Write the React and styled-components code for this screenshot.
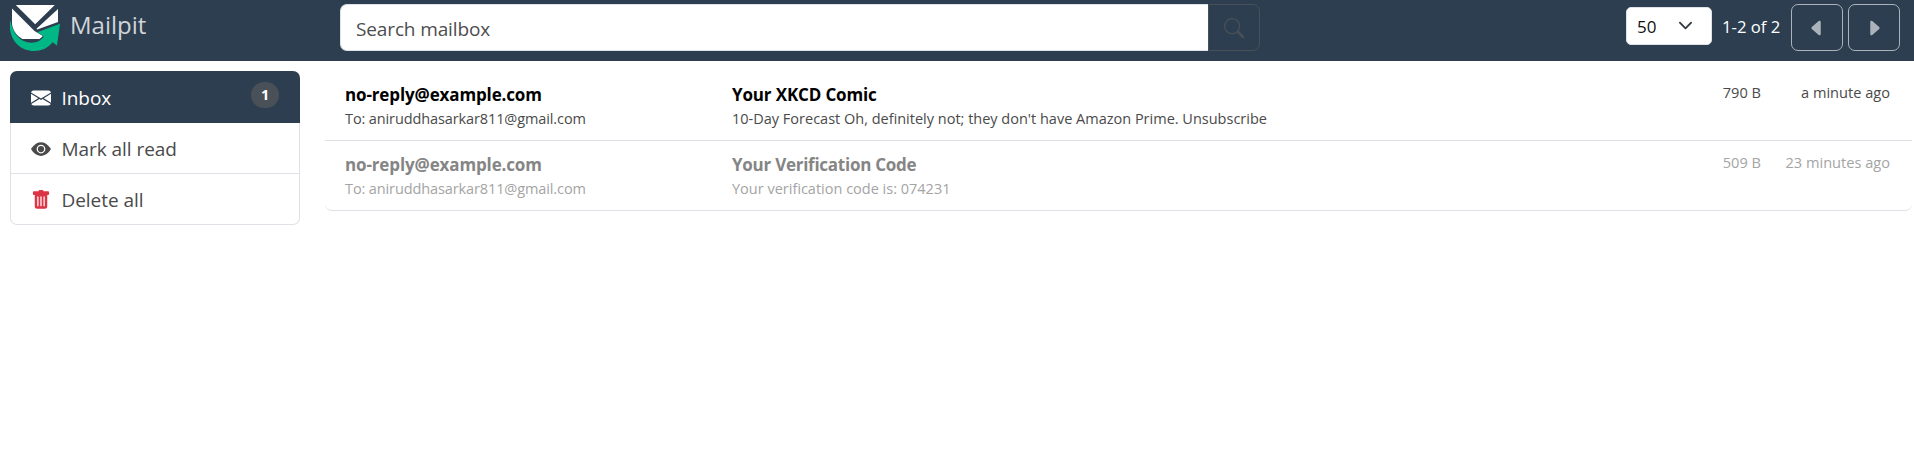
import React from "react";
import styled, { createGlobalStyle } from "styled-components";
import {
  BsCaretLeftFill,
  BsCaretRightFill,
  BsEnvelopeFill,
  BsEyeFill,
  BsSearch,
  BsTrashFill,
} from "react-icons/bs";

const GlobalStyle = createGlobalStyle`
  *, *::before, *::after { box-sizing: border-box; }
  body {
    margin: 0;
    background: #fff;
    color: #4a4a4a;
    font-family: "Open Sans", "Noto Sans", sans-serif;
  }
  button, input, select { font-family: inherit; margin: 0; }
`;

const Navbar = styled.header`
  display: flex;
  align-items: flex-start;
  height: 61px;
  padding: 4px 14px 0 10px;
  background: #2d3e50;
`;

const Brand = styled.a`
  display: flex;
  width: 330px;
  color: #d0d4d9;
  font-size: 24px;
  line-height: 42px;
  text-decoration: none;
  svg { width: 50px; height: 48px; margin-right: 10px; }
`;

const SearchForm = styled.form`
  display: flex;
  width: 920px;
  height: 47px;
`;

const SearchInput = styled.input`
  flex: 1;
  min-width: 0;
  padding: 2px 15px 0;
  border: 1px solid #dee2e6;
  border-right: 0;
  border-radius: 7px 0 0 7px;
  outline: 0;
  background: #fff;
  font-size: 19px;
  letter-spacing: -0.13px;
  &::placeholder { color: #4d4d4f; opacity: 1; }
`;

const SearchButton = styled.button`
  display: flex;
  align-items: center;
  justify-content: center;
  width: 52px;
  padding: 0;
  border: 1px solid #495057;
  border-radius: 0 7px 7px 0;
  background: transparent;
  color: #495057;
  font-size: 20px;
`;

const Pager = styled.div`
  display: flex;
  align-items: flex-start;
  margin-left: auto;
`;

const PageSize = styled.button`
  display: flex;
  align-items: center;
  justify-content: space-between;
  width: 86px;
  height: 38px;
  margin: 3px 10px 0 0;
  padding: 0 18px 0 10px;
  border: 1px solid #dee2e6;
  border-radius: 5px;
  background: #fff;
  color: #111;
  font-size: 17px;
  svg { width: 15px; height: 15px; margin-bottom: 1px; }
`;

const PageRange = styled.span`
  width: 69px;
  color: #fff;
  font-size: 16.7px;
  line-height: 45px;
  white-space: nowrap;
`;

const PageButton = styled.button`
  display: flex;
  align-items: center;
  justify-content: center;
  width: 52px;
  height: 47px;
  margin-left: ${({ $spaced }) => ($spaced ? "5px" : 0)};
  padding: 0;
  border: 1px solid #abb2b9;
  border-radius: 7px;
  background: transparent;
  color: #abb2b9;
  font-size: 20px;
`;

const Body = styled.div`
  display: flex;
  align-items: flex-start;
  padding: 0 2px 0 10px;
`;

const Sidebar = styled.nav`
  width: 290px;
  margin: 10px 25px 0 0;
  border: 1px solid #dee2e6;
  border-top: 0;
  border-radius: 7px;
`;

const SidebarItem = styled.a`
  display: flex;
  align-items: center;
  height: ${({ $active }) => ($active ? "52px" : "50px")};
  margin: ${({ $active }) => ($active ? "0 -1px" : 0)};
  padding: ${({ $active }) => ($active ? "1px 21px 0" : "1px 20px 0")};
  border-radius: ${({ $active }) => ($active ? "7px 7px 0 0" : 0)};
  background: ${({ $active }) => ($active ? "#2d3e50" : "transparent")};
  color: ${({ $active }) => ($active ? "#fff" : "#4a4a4a")};
  font-size: 19px;
  letter-spacing: -0.05px;
  & + & + & { height: 51px; border-top: 1px solid #dee2e6; }
`;

const ItemIcon = styled.span`
  display: flex;
  margin-right: 10.5px;
  color: ${({ $color }) => $color || "inherit"};
  font-size: 20px;
`;

const Badge = styled.span`
  width: 28px;
  height: 26px;
  margin: 0 0 5px auto;
  border-radius: 13px;
  background: #495057;
  color: #fff;
  font-size: 14.5px;
  font-weight: 700;
  line-height: 25px;
  text-align: center;
`;

const MessageList = styled.main`
  flex: 1;
  border-bottom: 1px solid #dee2e6;
  border-radius: 0 0 7px 7px;
`;

const MessageRow = styled.article`
  display: grid;
  grid-template-columns: 387px 1fr 100px 129px;
  height: ${({ $read }) => ($read ? "69px" : "80px")};
  padding: ${({ $read }) => ($read ? "12px" : "22px")} 22px 0 20px;
  border-bottom: ${({ $read }) => ($read ? 0 : "1px solid #dee2e6")};
  color: ${({ $read }) => ($read ? "#a4a4a5" : "#4a4a4a")};
  white-space: nowrap;
`;

const Primary = styled.div`
  color: ${({ $read }) => ($read ? "#858585" : "#000")};
  font-size: 17px;
  font-weight: 700;
  line-height: 24px;
  letter-spacing: ${({ $tracking }) => $tracking || "-0.13px"};
`;

const Secondary = styled.div`
  font-size: 14.5px;
  line-height: 24px;
  letter-spacing: ${({ $tracking }) => $tracking || 0};
`;

const Meta = styled.div`
  font-size: 14.6px;
  line-height: 18px;
  text-align: right;
`;

const messages = [
  {
    from: "no-reply@example.com",
    to: "To: aniruddhasarkar811@gmail.com",
    subject: "Your XKCD Comic",
    snippet: "10-Day Forecast Oh, definitely not; they don't have Amazon Prime. Unsubscribe",
    size: "790 B",
    age: "a minute ago",
    read: false,
    tracking: "-0.15px",
  },
  {
    from: "no-reply@example.com",
    to: "To: aniruddhasarkar811@gmail.com",
    subject: "Your Verification Code",
    snippet: "Your verification code is: 074231",
    size: "509 B",
    age: "23 minutes ago",
    read: true,
    tracking: "-0.26px",
  },
];

function Logo() {
  return (
    <svg viewBox="10 4 50 48" aria-hidden="true">
      <g fill="#fff">
        <path d="M15.8 5H54.8L35.2 24.2Z" />
        <path d="M12 8.6 34.5 30.9 42.9 35.9 39.6 39H22.4C16 35.3 12.8 30 12 24Z" />
        <path d="M58 9V22L37.2 29.4 36.5 28.7Z" />
      </g>
      <path
        fill="#00b786"
        d="M10.3 20C12 32 19.5 42.2 30.5 42.7 36.5 43 41.5 40.5 43.7 36.3L37.3 32.3 60 23.8 57 45.5 52.5 42.3C47.5 48.5 41.5 51 34 51 18.5 51 7.3 37.5 10.3 20Z"
      />
    </svg>
  );
}

export default function App() {
  return (
    <>
      <GlobalStyle />
      <Navbar>
        <Brand><Logo />Mailpit</Brand>
        <SearchForm>
          <SearchInput placeholder="Search mailbox" aria-label="Search" />
          <SearchButton type="button" aria-label="Search"><BsSearch /></SearchButton>
        </SearchForm>
        <Pager>
          <PageSize>
            50
            <svg viewBox="0 0 16 16" fill="none" stroke="#343a40" strokeWidth="2" strokeLinecap="round" strokeLinejoin="round">
              <path d="m2 5 6 6 6-6" />
            </svg>
          </PageSize>
          <PageRange>1-2 of 2</PageRange>
          <PageButton aria-label="Previous"><BsCaretLeftFill /></PageButton>
          <PageButton aria-label="Next" $spaced><BsCaretRightFill /></PageButton>
        </Pager>
      </Navbar>
      <Body>
        <Sidebar>
          <SidebarItem $active>
            <ItemIcon><BsEnvelopeFill /></ItemIcon>
            Inbox
            <Badge>1</Badge>
          </SidebarItem>
          <SidebarItem><ItemIcon><BsEyeFill /></ItemIcon>Mark all read</SidebarItem>
          <SidebarItem><ItemIcon $color="#dc3545"><BsTrashFill /></ItemIcon>Delete all</SidebarItem>
        </Sidebar>
        <MessageList>
          {messages.map((m) => (
            <MessageRow key={m.subject} $read={m.read}>
              <div>
                <Primary $read={m.read}>{m.from}</Primary>
                <Secondary $tracking="-0.11px">{m.to}</Secondary>
              </div>
              <div>
                <Primary $read={m.read} $tracking={m.tracking}>{m.subject}</Primary>
                <Secondary>{m.snippet}</Secondary>
              </div>
              <Meta>{m.size}</Meta>
              <Meta>{m.age}</Meta>
            </MessageRow>
          ))}
        </MessageList>
      </Body>
    </>
  );
}
